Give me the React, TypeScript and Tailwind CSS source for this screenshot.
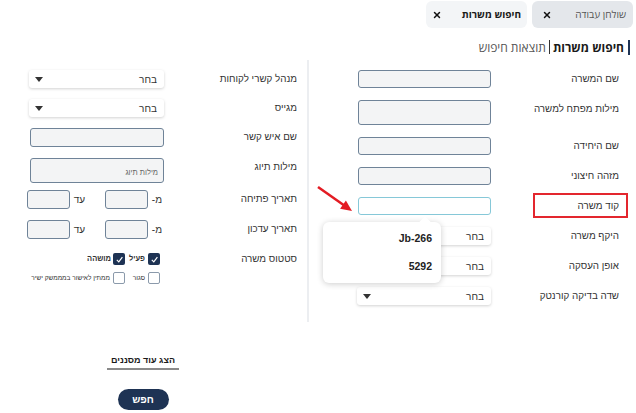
import { X } from 'lucide-react';

function Caret() {
  return (
    <svg width="8" height="5" viewBox="0 0 8 5" className="shrink-0">
      <polygon points="0,0 8,0 4,5" fill="#333" />
    </svg>
  );
}

function Input({ tall, focused, w = 'w-[133px]', h = 'h-[18px]', placeholder }: { tall?: boolean; focused?: boolean; w?: string; h?: string; placeholder?: string }) {
  return (
    <div
      className={`${w} ${tall ? 'h-[25px]' : h} rounded-[3px] border-[1.5px] ${
        focused ? 'border-[#86c8d8] bg-white' : 'border-[#6f8398] bg-[#f3f4f5]'
      } flex items-end pb-[4px] pr-[5px] text-[7.5px] text-[#666]`}
    >
      {placeholder}
    </div>
  );
}

function Select({ w = 'w-[134px]' }: { w?: string }) {
  return (
    <div className={`${w} h-[18px] rounded-[3px] bg-white shadow-[0_1px_3px_rgba(0,0,0,0.18)] flex items-center justify-between pr-[7px] pl-[6px] text-[10px] text-[#333]`}>
      <span>בחר</span>
      <Caret />
    </div>
  );
}

function Row({ label, children, labelW }: { label: React.ReactNode; children: React.ReactNode; labelW: string }) {
  return (
    <div className="flex items-start gap-3">
      <div className={`${labelW} shrink-0 text-[9.8px] leading-[18px] text-[#333]`}>{label}</div>
      {children}
    </div>
  );
}

function Check({ on }: { on?: boolean }) {
  return on ? (
    <span className="w-[12px] h-[12px] rounded-[2px] bg-[#1e3354] flex items-center justify-center shrink-0">
      <svg width="9" height="9" viewBox="0 0 10 10">
        <path d="M2 5.5 L4.2 7.6 L8.2 2.4" fill="none" stroke="#fff" strokeWidth="1.3" />
      </svg>
    </span>
  ) : (
    <span className="w-[12px] h-[12px] rounded-[2px] border border-[#8b9aab] bg-white shrink-0" />
  );
}

function DateRange() {
  return (
    <div className="flex items-center text-[10px] text-[#333]">
      <span className="w-[16px] pr-[2px] whitespace-nowrap">מ-</span>
      <Input w="w-[43px]" h="h-[19px]" />
      <span className="w-[35px] pr-[20px] whitespace-nowrap">עד</span>
      <Input w="w-[43px]" h="h-[19px]" />
    </div>
  );
}

export default function App() {
  return (
    <div dir="rtl" className="relative w-[636px] h-[413px] overflow-hidden bg-white font-['Liberation_Sans',Arial,sans-serif] text-[#222]">
      {/* tabs */}
      <div className="flex gap-[5px] pr-[3px] pt-[1px] font-['Open_Sans','Liberation_Sans',sans-serif]">
        <div className="w-[101px] h-[27px] rounded-md bg-[#e4e7eb] flex items-center justify-between pr-[7px] pl-[10px]">
          <span className="text-[10px] text-[#555]">שולחן עבודה</span>
          <X size={10} strokeWidth={3.5} color="#111" />
        </div>
        <div className="w-[101px] h-[27px] rounded-md bg-[#f3f5f7] flex items-center justify-between pr-[6px] pl-[6px]">
          <span className="text-[10px] font-bold text-[#1a1a1a]">חיפוש משרות</span>
          <X size={10} strokeWidth={3.5} color="#111" />
        </div>
      </div>

      {/* sub tabs */}
      <div className="flex items-center pr-[6px] mt-[11px] h-[16px] text-[12px] font-['Open_Sans','Liberation_Sans',sans-serif]">
        <span className="border-r-2 border-[#1e3354] pr-[4px] leading-[15px] font-bold text-[#1a1a1a]">חיפוש משרות</span>
        <span className="mx-[3px] w-px h-[14px] bg-[#333]" />
        <span className="text-[#555] leading-[15px]">תוצאות חיפוש</span>
      </div>

      {/* columns */}
      <div className="flex mt-[5px] h-[262px]">
        {/* right column */}
        <div className="w-[329px] shrink-0 border-l-2 border-[#eceef1] pt-[10px] pr-[17px] flex flex-col gap-3">
          <Row labelW="w-[116px]" label="שם המשרה"><Input /></Row>
          <Row labelW="w-[116px]" label="מילות מפתח למשרה"><Input tall /></Row>
          <Row labelW="w-[116px]" label="שם היחידה"><Input /></Row>
          <Row labelW="w-[116px]" label="מזהה חיצוני"><Input /></Row>
          <Row
            labelW="w-[116px]"
            label={
              <div className="relative">
                קוד משרה
                <span className="absolute -top-[4px] -bottom-[3px] left-[30px] -right-[9px] border-2 border-[#e3262e]" />
              </div>
            }
          >
            <div className="relative">
              <Input focused />
              <div className="absolute z-10 top-[25px] -left-[35px] w-[118px] h-[61px] rounded-md bg-white shadow-[0_1px_6px_rgba(0,0,0,0.2)] pt-[3px] pr-[9px] text-[10.5px] font-bold text-[#222]">
                <span className="absolute -top-[4px] right-[12px] w-[8px] h-[8px] rotate-45 bg-white" />
                <div className="h-[28px] flex items-center">Jb-266</div>
                <div className="h-[28px] flex items-center">5292</div>
              </div>
            </div>
          </Row>
          <Row labelW="w-[116px]" label="היקף משרה"><Select /></Row>
          <Row labelW="w-[116px]" label="אופן העסקה"><Select /></Row>
          <Row labelW="w-[116px]" label="שדה בדיקה קורנטק"><Select /></Row>
        </div>

        {/* left column */}
        <div className="flex-1 pt-[10px] pr-[10px] flex flex-col gap-[11px]">
          <Row labelW="w-[121px]" label="מנהל קשרי לקוחות"><Select w="w-[135px]" /></Row>
          <Row labelW="w-[121px]" label="מגייס"><Select w="w-[135px]" /></Row>
          <Row labelW="w-[121px]" label="שם איש קשר"><Input w="w-[134px]" h="h-[19px]" /></Row>
          <Row labelW="w-[121px]" label="מילות תיוג"><Input w="w-[134px]" tall placeholder="מילות תיוג" /></Row>
          <div className="-mt-[4px]">
            <Row labelW="w-[121px]" label="תאריך פתיחה"><DateRange /></Row>
          </div>
          <Row labelW="w-[121px]" label="תאריך עדכון"><DateRange /></Row>
          <Row labelW="w-[121px]" label="סטטוס משרה">
            <div className="flex flex-col gap-[7px] pt-[3px] pr-[4px] text-[#333]">
              <div className="flex items-center text-[7.5px] font-bold">
                <div className="w-[35px] flex items-center gap-[3px]">
                  <Check on />
                  <span>פעיל</span>
                </div>
                <div className="flex items-center gap-[2px]">
                  <Check on />
                  <span>מושהה</span>
                </div>
              </div>
              <div className="flex items-center text-[6.5px]">
                <div className="w-[35px] flex items-center gap-[3px]">
                  <Check />
                  <span>סגור</span>
                </div>
                <div className="flex items-center gap-[3px]">
                  <Check />
                  <span className="whitespace-nowrap">ממתין לאישור במממשק ישיר</span>
                </div>
              </div>
            </div>
          </Row>
        </div>
      </div>

      {/* bottom */}
      <div className="w-[286px] mr-auto flex flex-col items-center mt-[31px]">
        <span className="text-[9px] font-bold text-[#1a1a1a] border-b-2 border-[#8a8a8a] px-[4px] leading-[15px]">הצג עוד מסננים</span>
        <button className="mt-[19px] w-[51px] h-[21px] rounded-full bg-[#1e3354] text-white text-[10px] font-bold">חפש</button>
      </div>

      {/* annotation arrow */}
      <svg className="absolute left-[312px] top-[183px]" width="46" height="34" viewBox="0 0 46 34">
        <line x1="6" y1="4" x2="33" y2="23" stroke="#e31b23" strokeWidth="2.5" />
        <polygon points="40,28 28.1,25.8 33.9,17.6" fill="#e31b23" />
      </svg>
    </div>
  );
}
